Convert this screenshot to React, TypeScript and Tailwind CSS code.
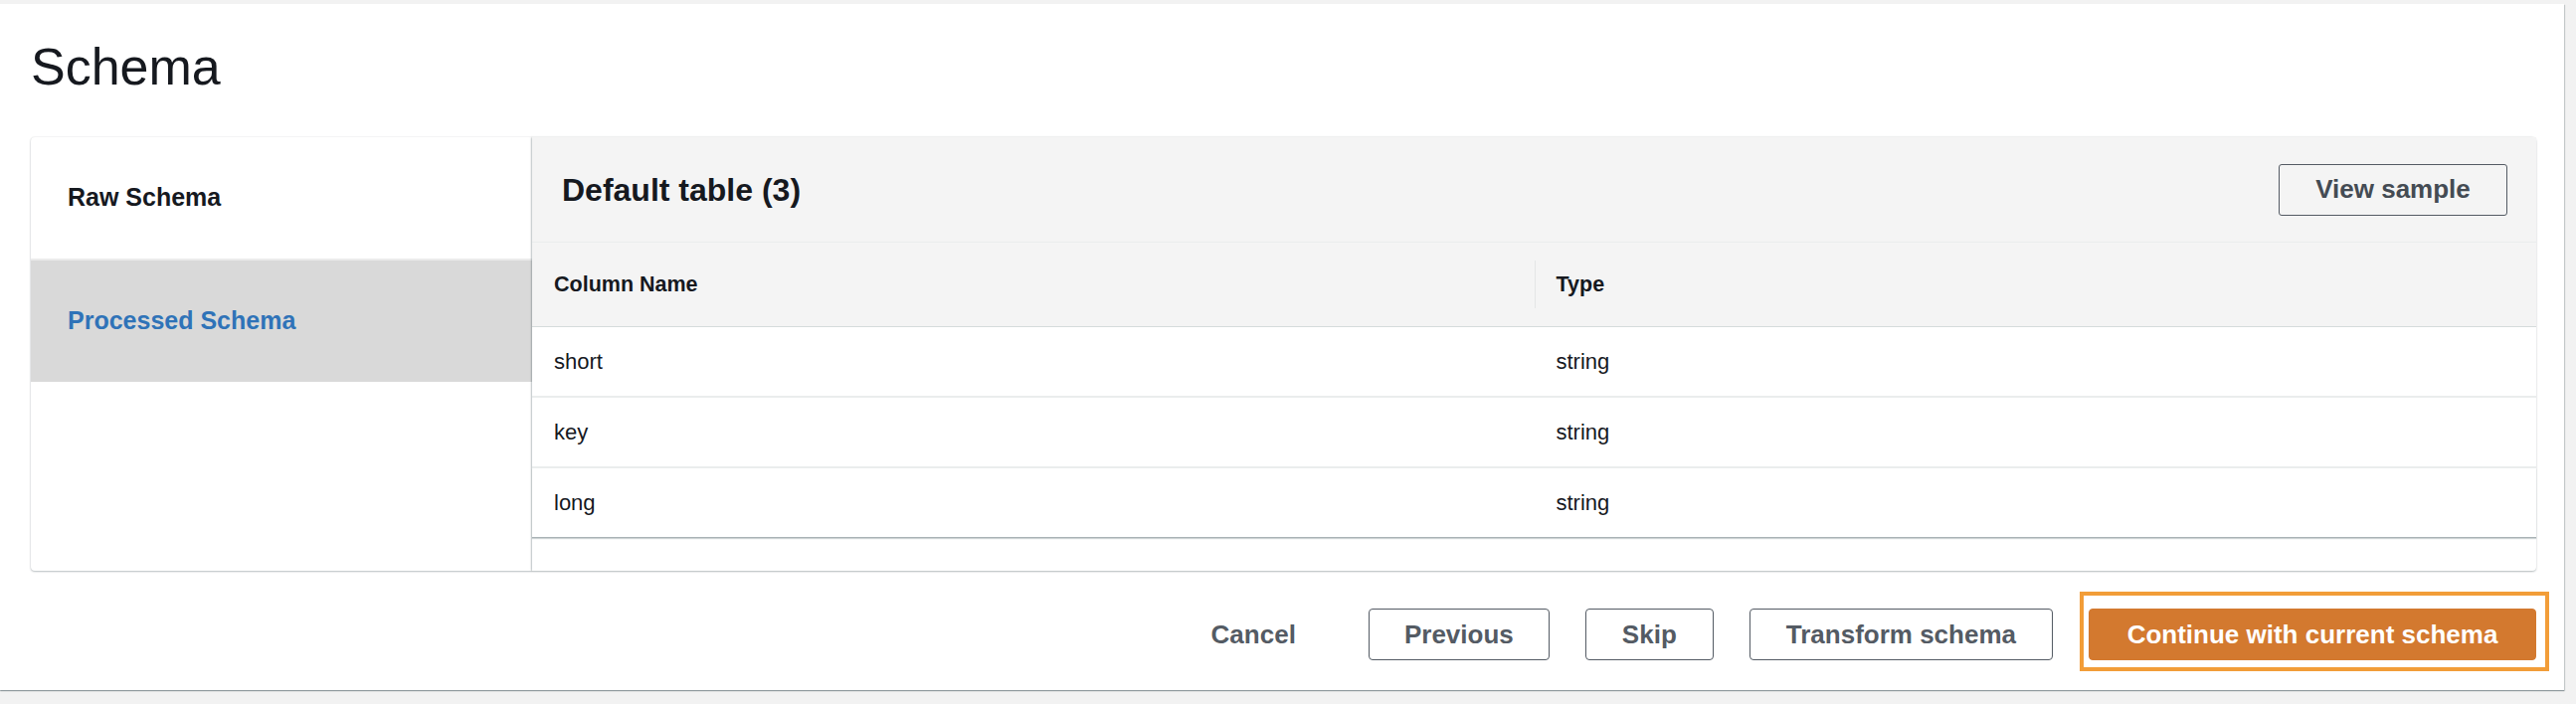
// schema review step

type SchemaColumn = {
  name: string;
  type: string;
};

const columns: SchemaColumn[] = [
  { name: "short", type: "string" },
  { name: "key", type: "string" },
  { name: "long", type: "string" },
];

const font = "font-['Liberation_Sans',Arial,Helvetica,sans-serif]";

function SideTabs() {
  return (
    <div className="flex w-[504px] shrink-0 flex-col rounded-l-[4px] bg-white shadow-[0_1px_2px_rgba(0,28,36,0.25),0_0_2px_rgba(0,28,36,0.12)]">
      <div className="flex h-[122px] items-center pl-[37px] text-[25px] font-bold text-[#16191f]">
        Raw Schema
      </div>
      <div className="h-[2px] bg-[#ebebeb]" />
      <div className="flex h-[122px] items-center bg-[#d9d9d9] pl-[37px] text-[25px] font-bold text-[#2f73b8]">
        Processed Schema
      </div>
    </div>
  );
}

function SchemaTable() {
  return (
    <div className="flex flex-1 flex-col rounded-r-[4px] bg-white shadow-[-1px_0_2px_rgba(0,28,36,0.2),0_1px_2px_rgba(0,28,36,0.25)]">
      {/* header w/ title + button */}
      <div className="flex h-[106px] items-center justify-between border-b border-[#eaeded] bg-[#f4f4f4] pl-[30px] pr-[29px]">
        <h2 className="text-[32px] font-bold text-[#16191f]">Default table (3)</h2>
        <button
          className="h-[52px] w-[230px] rounded-[3px] border border-[#545b64] text-[26px] font-bold text-[#444b53]"
          type="button"
        >
          View sample
        </button>
      </div>

      <div className="grid h-[85px] grid-cols-2 border-b border-[#d5dbdb] bg-[#f4f4f4] text-[21.5px] font-bold text-[#16191f]">
        <div className="flex items-center pl-[22px]">Column Name</div>
        <div className="flex items-center">
          <div className="h-[48px] w-px bg-[#e4e6e6]" />
          <span className="ml-[21px]">Type</span>
        </div>
      </div>

      {columns.map((col, i) => (
        <div
          key={col.name}
          className={
            i === columns.length - 1
              ? "grid h-[70px] grid-cols-2 border-b border-[#aab3b6] text-[22px] text-[#16191f] shadow-[0_1px_1px_rgba(0,28,36,0.2)]"
              : "grid h-[71px] grid-cols-2 border-b-2 border-[#eaeded] text-[22px] text-[#16191f]"
          }
        >
          <div className="flex items-center pl-[22px]">{col.name}</div>
          <div className="flex items-center pl-[22px]">{col.type}</div>
        </div>
      ))}

      <div className="flex-1" />
    </div>
  );
}

function Footer() {
  return (
    <div className="mt-[38px] flex items-center justify-end gap-[36px] text-[26px] font-bold">
      <button className="h-[52px] px-[37px] text-[#545b64]" type="button">
        Cancel
      </button>
      <button
        className="h-[52px] w-[182px] rounded-[4px] border border-[#545b64] text-[#545b64]"
        type="button"
      >
        Previous
      </button>
      <button
        className="h-[52px] rounded-[4px] border border-[#545b64] px-[36px] text-[#545b64]"
        type="button"
      >
        Skip
      </button>
      <button
        className="h-[52px] rounded-[4px] border border-[#545b64] px-[36px] text-[#545b64]"
        type="button"
      >
        Transform schema
      </button>
      <div className="relative">
        {/* focus ring */}
        <div className="absolute -bottom-[11px] -left-[9px] -right-[13px] -top-[17px] border-4 border-[#f29d38]" />
        <button
          className="relative h-[52px] w-[450px] rounded-[4px] border border-[#d3792f] bg-[#d3792f] text-white"
          type="button"
        >
          Continue with current schema
        </button>
      </div>
    </div>
  );
}

export default function App() {
  return (
    <div className={`${font} h-[708px] w-[2590px] overflow-hidden bg-[#f2f2f2] pt-[4px]`}>
      <div className="h-[690px] w-[2578px] bg-white pl-[31px] pr-[28px] pt-[33px] shadow-[0_1px_1px_rgba(0,28,36,0.3),1px_1px_1px_rgba(0,28,36,0.15)]">
        <h1 className="text-[52px] leading-[60px] font-normal text-[#16191f]">Schema</h1>

        <div className="mt-[41px] flex h-[436px]">
          <SideTabs />
          <SchemaTable />
        </div>

        <Footer />
      </div>
    </div>
  );
}
